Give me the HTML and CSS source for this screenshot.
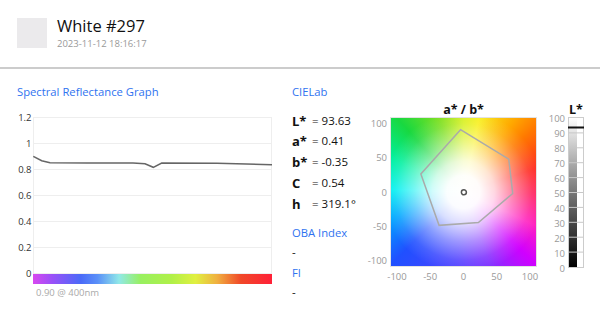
FILE: index.html
```html
<!DOCTYPE html>
<html lang="en">
<head>
  <meta charset="UTF-8">
  <title>White #297</title>
  <link rel="stylesheet" href="styles.css">
</head>
<body>
  <header class="head">
    <div class="swatch"></div>
    <div class="head-text">
      <div class="name">White #297</div>
      <div class="date">2023-11-12 18:16:17</div>
    </div>
  </header>

  <main class="panels">
    <!-- Spectral graph -->
    <section class="spectral">
      <h2 class="panel-title">Spectral Reflectance Graph</h2>
      <svg class="spectral-graph" width="255" height="176" viewBox="0 0 255 176">
        <defs>
          <linearGradient id="spectrum" x1="0" x2="1" y1="0" y2="0">
            <stop offset="0" stop-color="#d848f0"/>
            <stop offset="0.08" stop-color="#9a50f8"/>
            <stop offset="0.2" stop-color="#4a6af8"/>
            <stop offset="0.27" stop-color="#5a90f8"/>
            <stop offset="0.36" stop-color="#90e8e8"/>
            <stop offset="0.45" stop-color="#98f060"/>
            <stop offset="0.58" stop-color="#b0f048"/>
            <stop offset="0.68" stop-color="#e0f040"/>
            <stop offset="0.77" stop-color="#f0b040"/>
            <stop offset="0.87" stop-color="#f04828"/>
            <stop offset="1" stop-color="#ff2038"/>
          </linearGradient>
        </defs>
        <g class="grid">
          <line x1="16" x2="255" y1="7.5" y2="7.5"/>
          <line x1="16" x2="255" y1="33.5" y2="33.5"/>
          <line x1="16" x2="255" y1="59.5" y2="59.5"/>
          <line x1="16" x2="255" y1="85.5" y2="85.5"/>
          <line x1="16" x2="255" y1="111.5" y2="111.5"/>
          <line x1="16" x2="255" y1="137.5" y2="137.5"/>
          <line x1="16" x2="255" y1="163.5" y2="163.5"/>
          <line x1="16.5" x2="16.5" y1="7" y2="164"/>
          <line x1="254.5" x2="254.5" y1="7" y2="164"/>
        </g>
        <g class="ticks">
          <text x="14.5" y="11">1.2</text>
          <text x="14.5" y="37">1</text>
          <text x="14.5" y="63">0.8</text>
          <text x="14.5" y="89">0.6</text>
          <text x="14.5" y="115">0.4</text>
          <text x="14.5" y="141">0.2</text>
          <text x="14.5" y="167">0</text>
        </g>
        <polyline class="curve" points="16.3,46.3 24.7,50.7 33,52.7 70,53 116,53 128,53.8 136.3,57.3 144.7,53 200,53.3 255,54.7"/>
        <rect x="16" y="164" width="239" height="10" fill="url(#spectrum)"/>
      </svg>
      <div class="caption">0.90 @ 400nm</div>
    </section>

    <!-- CIELab values -->
    <section class="lab">
      <h2 class="panel-title">CIELab</h2>
      <div class="lab-values">
        <span class="key">L*</span><span class="val">= 93.63</span>
        <span class="key">a*</span><span class="val">= 0.41</span>
        <span class="key">b*</span><span class="val">= -0.35</span>
        <span class="key">C</span><span class="val">= 0.54</span>
        <span class="key">h</span><span class="val">= 319.1°</span>
      </div>
      <h2 class="panel-title oba">OBA Index</h2>
      <div class="dash">-</div>
      <h2 class="panel-title fi">FI</h2>
      <div class="dash">-</div>
    </section>

    <!-- a*/b* plane -->
    <section class="ab-chart">
      <div class="chart-title ab-title">a* / b*</div>
      <div class="ab-body">
        <div class="ab-yaxis">
          <span>100</span><span>50</span><span>0</span><span>-50</span><span>-100</span>
        </div>
        <div class="ab-plot">
          <svg viewBox="-110 -110 220 220" preserveAspectRatio="none">
            <polygon class="gamut" points="-4.5,-92.6 68.7,-48.8 74.7,2.3 22.6,45.3 -37.1,49.6 -64.7,-26.9"/>
            <ellipse class="sample" cx="0.6" cy="0.5" rx="3.8" ry="3.7"/>
          </svg>
        </div>
      </div>
      <div class="ab-xaxis">
        <span>-100</span><span>-50</span><span>0</span><span>50</span><span>100</span>
      </div>
    </section>

    <!-- L* bar -->
    <section class="l-chart">
      <div class="chart-title l-title">L*</div>
      <div class="l-axis">
        <span>100</span><span>90</span><span>80</span><span>70</span><span>60</span><span>50</span>
        <span>40</span><span>30</span><span>20</span><span>10</span><span>0</span>
      </div>
      <svg class="l-bar" width="16" height="151" viewBox="0 0 16 151">
        <defs>
          <linearGradient id="lightness" x1="0" x2="0" y1="0" y2="1">
            <stop offset="0" stop-color="#ffffff"/>
            <stop offset="0.2" stop-color="#c6c6c6"/>
            <stop offset="0.4" stop-color="#919191"/>
            <stop offset="0.6" stop-color="#5e5e5e"/>
            <stop offset="0.8" stop-color="#303030"/>
            <stop offset="1" stop-color="#000000"/>
          </linearGradient>
        </defs>
        <rect x="0.5" y="0.5" width="15" height="150" fill="#fff" stroke="#ccc"/>
        <rect x="1" y="1" width="8" height="149" fill="url(#lightness)"/>
        <g class="l-lines">
          <line x1="1" x2="15" y1="15.9" y2="15.9"/>
          <line x1="1" x2="15" y1="30.8" y2="30.8"/>
          <line x1="1" x2="15" y1="45.7" y2="45.7"/>
          <line x1="1" x2="15" y1="60.6" y2="60.6"/>
          <line x1="1" x2="15" y1="75.5" y2="75.5"/>
          <line x1="1" x2="15" y1="90.4" y2="90.4"/>
          <line x1="1" x2="15" y1="105.3" y2="105.3"/>
          <line x1="1" x2="15" y1="120.2" y2="120.2"/>
          <line x1="1" x2="15" y1="135.1" y2="135.1"/>
        </g>
        <rect x="0" y="9.5" width="16" height="2" fill="#111"/>
      </svg>
    </section>
  </main>
</body>
</html>
```

FILE: styles.css
```css
body { margin: 0; font-family: "Open Sans", "Noto Sans", sans-serif; color: #111; background: #fff; }

.head { display: flex; gap: 10px; height: 69px; box-sizing: border-box; padding: 18px 17px 0; border-bottom: 2px solid #ccc; }
.swatch { width: 30px; height: 30px; background: #ebeaec; }
.head-text { margin-top: -3px; }
.name { font-size: 16.5px; line-height: 22px; color: #111; }
.date { font-size: 9.5px; line-height: 13px; color: #999; }

.panels { display: flex; padding: 15px 0 0 17px; }
.panel-title { margin: 0; font-size: 11.25px; line-height: 16px; font-weight: normal; color: #2f73f0; }

.spectral { width: 255px; }
.spectral-graph { display: block; margin-top: 10px; }
.grid line { stroke: #eee; stroke-width: 1; }
.ticks text { font-size: 9.5px; fill: #333; text-anchor: end; }
.curve { fill: none; stroke: #666; stroke-width: 1.5; }
.caption { font-size: 9.5px; line-height: 14px; padding-left: 19px; color: #aaa; }

.lab { width: 70px; margin-left: 20px; }
.lab-values { display: grid; grid-template-columns: 20px auto; margin-top: 10.5px; line-height: 20.9px; }
.lab-values .key { font-size: 13px; font-weight: bold; }
.lab-values .val { font-size: 11.5px; }
.panel-title.oba { margin-top: 10.2px; }
.panel-title.fi { margin-top: 1.5px; }
.dash { font-size: 11.5px; line-height: 22px; }

.chart-title { font-size: 12.5px; line-height: 14px; font-weight: bold; text-align: center; }
.ab-chart { width: 175px; }
.ab-title { margin-top: 19px; padding-left: 28px; }
.ab-body { display: flex; align-items: flex-start; }
.ab-yaxis { width: 25px; height: 150px; padding-right: 3px; margin-top: -10px; display: flex; flex-direction: column; text-align: right; font-size: 9.5px; line-height: 34.25px; color: #999; }
.ab-plot { width: 145px; height: 148px; border: 1px solid #e2e2e2; background:
  radial-gradient(circle at 50% 50%, #fff 0, rgba(255,255,255,.98) 16%, rgba(255,255,255,.82) 30%, rgba(255,255,255,.45) 48%, rgba(255,255,255,.12) 66%, rgba(255,255,255,0) 78%),
  conic-gradient(from 0deg, #d8f020, #f8f020 12deg, #ffa800 35deg, #ff7800 48deg, #ff2a20 72deg, #ff2060 92deg, #ff20c0 115deg, #d000ff 135deg, #8030ff 160deg, #5040ff 185deg, #2050ff 225deg, #00a8ff 250deg, #00f0f0 272deg, #00f0a0 295deg, #18d840 318deg, #80e020 342deg, #d8f020 360deg); }
.ab-plot svg { display: block; width: 100%; height: 100%; }
.gamut { fill: none; stroke: #aaa; stroke-width: 1.5; vector-effect: non-scaling-stroke; }
.sample { fill: none; stroke: #555; stroke-width: 1.5; vector-effect: non-scaling-stroke; }
.ab-xaxis { display: flex; margin: 1.7px 0 0 18.4px; font-size: 9.5px; line-height: 16px; color: #999; }
.ab-xaxis span { flex: none; width: 33.25px; text-align: center; }

.l-chart { display: grid; grid-template-columns: 24px 16px; column-gap: 3px; margin-left: 4px; align-content: start; align-items: start; }
.l-title { grid-column: 2; margin-top: 19px; }
.l-axis { grid-column: 1; grid-row: 2; height: 151px; margin-top: -6.2px; display: flex; flex-direction: column; text-align: right; font-size: 9.5px; line-height: 15px; color: #999; }
.l-bar { grid-column: 2; grid-row: 2; display: block; }
.l-lines line { stroke: #c8c8c8; stroke-width: 1; }
```
